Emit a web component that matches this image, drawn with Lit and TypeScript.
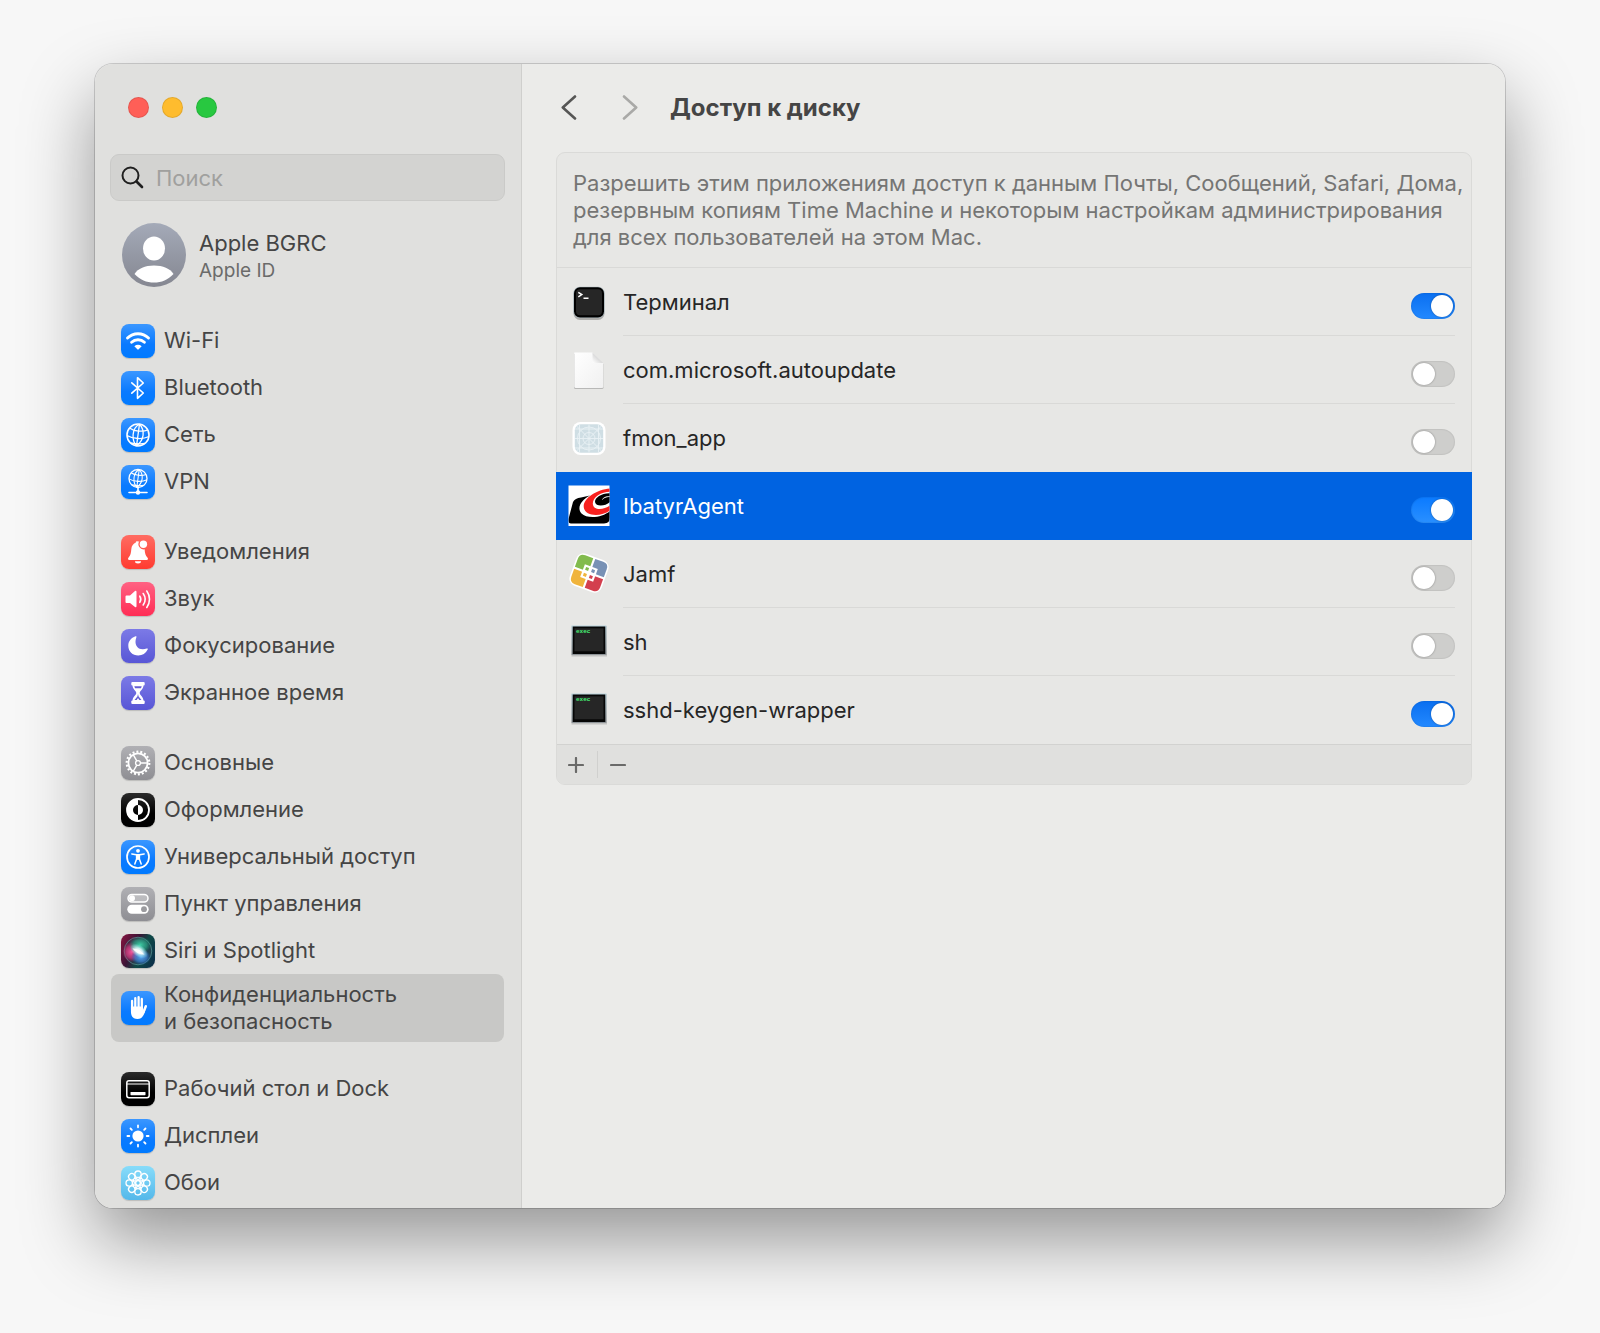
import { LitElement, html, svg, css, nothing } from "lit";
import type { TemplateResult } from "lit";
import { customElement, property, state } from "lit/decorators.js";
import { classMap } from "lit/directives/class-map.js";

interface NavItem {
  icon: string;
  tone: string;
  lines: string[];
}

interface AppEntry {
  id: string;
  name: string;
  icon: string;
  enabled: boolean;
}

const NAV_GROUPS: NavItem[][] = [
  [
    { icon: "wifi", tone: "blue", lines: ["Wi-Fi"] },
    { icon: "bluetooth", tone: "blue", lines: ["Bluetooth"] },
    { icon: "globe", tone: "blue", lines: ["Сеть"] },
    { icon: "vpn", tone: "blue", lines: ["VPN"] },
  ],
  [
    { icon: "bell", tone: "red", lines: ["Уведомления"] },
    { icon: "sound", tone: "pink", lines: ["Звук"] },
    { icon: "moon", tone: "indigo", lines: ["Фокусирование"] },
    { icon: "hourglass", tone: "indigo", lines: ["Экранное время"] },
  ],
  [
    { icon: "gear", tone: "gray", lines: ["Основные"] },
    { icon: "appearance", tone: "black", lines: ["Оформление"] },
    { icon: "accessibility", tone: "blue", lines: ["Универсальный доступ"] },
    { icon: "controls", tone: "gray", lines: ["Пункт управления"] },
    { icon: "siri", tone: "siri", lines: ["Siri и Spotlight"] },
    { icon: "hand", tone: "blue", lines: ["Конфиденциальность", "и безопасность"] },
  ],
  [
    { icon: "dock", tone: "black", lines: ["Рабочий стол и Dock"] },
    { icon: "sun", tone: "blue", lines: ["Дисплеи"] },
    { icon: "flower", tone: "sky", lines: ["Обои"] },
  ],
];

const SPOKES = [0, 45, 90, 135, 180, 225, 270, 315];

const GLOBE = svg`
  <g fill="none" stroke="#fff" stroke-width="1.3">
    <circle r="11" stroke-width="1.6"/>
    <path d="M1.5-11C-6.500-6.500-6.500 5-1.500 11M1.500-11C7.500-4 6 5-1.500 11M1.500-11L-1.500 11"/>
    <path d="M-8.500-7C-4-3.500 5-3 9.800-5M-11 .5C-5 4.200 5 4.500 11 1.500M-7.500 7.800C-4 8.500 3 9 7 8.400"/>
  </g>`;

const GLYPHS: Record<string, TemplateResult> = {
  wifi: svg`
    <g fill="none" stroke="#fff" stroke-width="2.900" stroke-linecap="round">
      <path d="M6.500 14A15 15 0 0 1 27.500 14"/>
      <path d="M10.600 18.300A9.200 9.200 0 0 1 23.400 18.300"/>
    </g>
    <path fill="#fff" d="M13.300 22.200Q17 19.300 20.700 22.200L17.700 25.300Q17 26 16.300 25.300Z"/>`,
  bluetooth: svg`
    <path fill="none" stroke="#fff" stroke-width="1.600" stroke-linejoin="round" stroke-linecap="round"
      d="M10.800 11.800L22.300 22L16.500 27.300V6.700L22.300 12L10.800 22.200"/>`,
  globe: svg`<g transform="translate(17 17)">${GLOBE}</g>`,
  vpn: svg`
    <g transform="translate(17 13.500) scale(.82)">${GLOBE}</g>
    <path stroke="#fff" stroke-width="1.600" stroke-linecap="round" d="M17 22.500V26M8 27.500H26"/>
    <circle cx="17" cy="27.500" r="2.200" fill="#fff"/>`,
  bell: svg`
    <path fill="#fff" d="M17 6.500C20 6.500 17 6.500 18.300 6.300A5.200 5.200 0 0 0 23.600 14.300C23.900 18.500 24.600 20.500 26.400 22.500C27.600 24 27 25 25.600 25H8.400C7 25 6.400 24 7.600 22.500C9.600 20.300 10 18 10.300 14.300C10.500 10.500 12.600 8.500 14.600 7.700C15 6.300 16 6 17 6.500Z"/>
    <path fill="#fff" d="M14 26.200H20A3 2.200 0 0 1 14 26.200Z"/>
    <circle cx="22.400" cy="9.200" r="3.700" fill="#fff"/>`,
  sound: svg`
    <path fill="#fff" d="M5.500 13.500H9L14 9Q15.500 8.200 15.500 10V24Q15.500 25.800 14 25L9 21H5.500Q4.500 21 4.500 20V14.500Q4.500 13.500 5.500 13.500Z"/>
    <g fill="none" stroke="#fff" stroke-width="1.600" stroke-linecap="round">
      <path d="M18.800 14.200A5.500 5.500 0 0 1 18.800 20.300"/>
      <path d="M22.200 11.500A10 10 0 0 1 22.200 23"/>
      <path d="M25.800 9A14 14 0 0 1 25.800 25.500"/>
    </g>`,
  moon: svg`
    <path fill="#fff" d="M14.500 7.300C15.200 7 15.700 7.500 15.400 8.200C12.300 16.500 17.500 22.300 25.800 19.600C26.600 19.400 27 19.800 26.700 20.600C24.800 24.500 21.500 26.500 17.300 26.500C11.500 26.500 7.300 22.300 7.300 16.700C7.300 12.500 10 8.800 14.500 7.300Z"/>`,
  hourglass: svg`
    <g fill="#fff">
      <rect x="10.300" y="6" width="13.400" height="3.600" rx="1"/>
      <rect x="10.300" y="24.400" width="13.400" height="3.600" rx="1"/>
      <path d="M11.500 9H22.500C22.500 13.500 19 14.500 18.700 17C19 19.500 22.500 20.500 22.500 25H11.500C11.500 20.500 15 19.500 15.300 17C15 14.500 11.500 13.500 11.500 9Z"/>
    </g>
    <path fill="#655fd4" d="M13.300 10.300H20.700L20 12.300H14ZM17 18L17.600 20.500L20.500 23.900H18.300L17 22L15.700 23.900H13.500L16.400 20.500Z"/>`,
  gear: svg`
    <g fill="none" stroke="#fff" transform="translate(17 17)">
      <circle r="9.600" stroke-width="1.800"/>
      <circle r="11.300" stroke-width="2.200" stroke-dasharray="1.972 1.972"/>
      <circle r="2.400" stroke-width="1.400"/>
      <path stroke-width="1.400" d="M2.400 0H9.500M-1.200-2.100L-4.800-8.300M-1.200 2.100L-4.800 8.300"/>
    </g>`,
  appearance: svg`
    <circle cx="17" cy="17" r="11" fill="none" stroke="#fff" stroke-width="1.800"/>
    <path fill="#fff" d="M17 6A11 11 0 0 0 17 28V22A5 5 0 0 1 17 12ZM17 12A5 5 0 0 1 17 22Z"/>`,
  accessibility: svg`
    <circle cx="17" cy="17" r="11" fill="none" stroke="#fff" stroke-width="1.700"/>
    <circle cx="17" cy="10.800" r="1.900" fill="#fff"/>
    <path fill="none" stroke="#fff" stroke-width="1.500" stroke-linecap="round" stroke-linejoin="round"
      d="M10.800 13.900L15.300 14.700H18.700L23.200 13.900M15.600 15V19L13.800 24M18.400 15V19L20.200 24M16 19H18"/>
    <path fill="#fff" d="M15.500 14.500H18.500V19.500H15.500Z"/>`,
  controls: svg`
    <rect x="7" y="7.500" width="20" height="7.600" rx="3.800" fill="#fff" fill-opacity=".25" stroke="#fff" stroke-width="1.500"/>
    <circle cx="11" cy="11.300" r="3" fill="#fff"/>
    <rect x="6.300" y="17.700" width="21.400" height="9" rx="4.500" fill="#fff"/>
    <circle cx="23" cy="22.200" r="2.900" fill="#9b9b9f"/>`,
  siri: svg`
    <defs>
      <radialGradient id="siri-core">
        <stop offset="0" stop-color="#fff"/>
        <stop offset=".4" stop-color="#e4ffff" stop-opacity=".85"/>
        <stop offset="1" stop-color="#9ff" stop-opacity="0"/>
      </radialGradient>
      <radialGradient id="siri-pink">
        <stop offset="0" stop-color="#f0559c"/>
        <stop offset=".6" stop-color="#d83a80" stop-opacity=".7"/>
        <stop offset="1" stop-color="#d0206a" stop-opacity="0"/>
      </radialGradient>
      <radialGradient id="siri-blue">
        <stop offset="0" stop-color="#5aa8f5"/>
        <stop offset=".6" stop-color="#3d82d8" stop-opacity=".7"/>
        <stop offset="1" stop-color="#1b5cc4" stop-opacity="0"/>
      </radialGradient>
      <radialGradient id="siri-green">
        <stop offset="0" stop-color="#3fcfa6"/>
        <stop offset=".6" stop-color="#2ba586" stop-opacity=".7"/>
        <stop offset="1" stop-color="#129a78" stop-opacity="0"/>
      </radialGradient>
    </defs>
    <circle cx="17" cy="17" r="13.800" fill="#345" fill-opacity=".45" stroke="#6fb6b0" stroke-opacity=".6" stroke-width=".9"/>
    <ellipse cx="10.500" cy="18" rx="9" ry="10" fill="url(#siri-pink)"/>
    <ellipse cx="19" cy="11" rx="11" ry="8.500" fill="url(#siri-green)"/>
    <ellipse cx="20" cy="23" rx="10" ry="8" fill="url(#siri-blue)"/>
    <ellipse cx="18" cy="17" rx="10" ry="6" fill="url(#siri-core)" transform="rotate(32 18 17)"/>
    <path fill="#fff" fill-opacity=".9" d="M11.500 14.500Q18 14 23.500 20.500Q16 20.500 11.500 14.500Z"/>`,
  hand: svg`
    <g fill="none" stroke="#fff" stroke-width="2.300" stroke-linecap="round">
      <path d="M11.100 10V19M14.300 7.200V17M17.600 6.200V17M20.800 8V18"/>
      <path d="M24.800 15.200L22.300 21.500" stroke-width="2.500"/>
    </g>
    <path fill="#fff" d="M9.950 15.500H21.950V19.500L24.500 18.500C23 24 21.500 28 16.500 28C12 28 9.950 25 9.950 21Z"/>`,
  dock: svg`
    <rect x="5.800" y="8.700" width="22.400" height="17" rx="2.200" fill="none" stroke="#fff" stroke-width="1.500"/>
    <path stroke="#fff" stroke-width="1.200" d="M6 12H28"/>
    <rect x="9.500" y="20" width="15" height="3.200" rx=".6" fill="#fff"/>`,
  sun: svg`
    <circle cx="17" cy="17" r="5.600" fill="#fff"/>
    ${SPOKES.map(
      (a) => svg`<path stroke="#fff" stroke-width="1.800" stroke-linecap="round" d="M17 6.400V8.300" transform="rotate(${a} 17 17)"/>`,
    )}`,
  flower: svg`
    <g fill="none" stroke="#fff" stroke-width="1.300">
      ${SPOKES.map((a) => svg`<circle cx="17" cy="8.200" r="3.200" transform="rotate(${a} 17 17)"/>`)}
      ${SPOKES.map((a) => svg`<path d="M17 14.800L15 11.200M17 14.800L19 11.200" transform="rotate(${a} 17 17)"/>`)}
      <circle cx="17" cy="17" r="2.300"/>
    </g>`,
};

const EXEC = svg`
  <defs>
    <linearGradient id="frame" x1="0" y1="0" x2="0" y2="1">
      <stop offset="0" stop-color="#b9d3dc"/>
      <stop offset="1" stop-color="#8d9296"/>
    </linearGradient>
  </defs>
  <g transform="translate(0 -1)">
    <rect x="3.500" y="6" width="35.500" height="30.500" fill="#000" fill-opacity=".16"/>
    <rect x="3.500" y="5.500" width="35" height="29.500" fill="url(#frame)"/>
    <rect x="4.700" y="6.500" width="32.600" height="27.500" fill="#060606"/>
    <rect x="6.500" y="8.300" width="29" height="23" fill="#262626"/>
    <text x="8" y="13" font-family="Liberation Mono, monospace" font-weight="700" font-size="6" fill="#46f074">exec</text>
  </g>`;

const APP_ICONS: Record<string, TemplateResult> = {
  terminal: svg`
    <rect x="5.500" y="7" width="31" height="32" rx="6.500" fill="#000" fill-opacity=".25"/>
    <rect x="5.300" y="5.800" width="31.400" height="31.200" rx="6.500" fill="#aebcc2"/>
    <rect x="6" y="6.300" width="30" height="30.200" rx="6" fill="#000"/>
    <rect x="8" y="8.300" width="26" height="26" rx="4" fill="#262626"/>
    <path fill="none" stroke="#fff" stroke-width="1.500" d="M10.300 11.300L13.800 13.600L10.300 15.900M15.500 17.300H20.500"/>`,
  document: svg`
    <defs>
      <linearGradient id="paper" x1="0" y1="0" x2="1" y2="1">
        <stop offset="0" stop-color="#fff"/>
        <stop offset="1" stop-color="#f0f0f0"/>
      </linearGradient>
      <linearGradient id="fold" x1="0" y1="1" x2="1" y2="0">
        <stop offset="0" stop-color="#fff"/>
        <stop offset=".5" stop-color="#d9d9d9"/>
      </linearGradient>
    </defs>
    <path fill="#000" fill-opacity=".2" d="M6 5H25L35.500 15V38.500Q35.500 40 34 40H7.500Q6 40 6 38.500Z"/>
    <path fill="url(#paper)" d="M6.500 3.500H24.500L35.300 14V37.500Q35.300 39 33.800 39H7.800Q6.300 39 6.300 37.500V3.500Z"/>
    <path fill="url(#fold)" d="M24.500 3.500V12.500Q24.500 14 26 14H35.300Z"/>`,
  fmon: svg`
    <rect x="4.500" y="5" width="33" height="33" rx="8" fill="#fff"/>
    <rect x="6.800" y="7.300" width="28.400" height="28.400" rx="6" fill="#cfdee4"/>
    <g fill="none" stroke="#eaf2f5" stroke-width=".9">
      <path d="M21 7.500V35.500M7 21.500H35M11.500 8V35M30.500 8V35M7 12H35M7 31H35M8.500 9L33.500 34M33.500 9L8.500 34"/>
      <circle cx="21" cy="21.500" r="11.500"/>
      <circle cx="21" cy="21.500" r="6"/>
    </g>`,
  ibatyr: svg`
    <defs><clipPath id="ib"><rect x=".5" y=".5" width="41" height="40.500"/></clipPath></defs>
    <rect x=".5" y=".5" width="41" height="40.500" fill="#fff"/>
    <g clip-path="url(#ib)">
      <path fill="#000" d="M5 17Q7 13 13 12.500L22 10.500C13 15 8.500 23 13.500 28.500C19 34 34 33 42 26V32Q42 38.500 36 38.500H3Q0 38.500 .5 34Z"/>
      <path fill="#f8211f" d="M42 3.500C28 4.500 14.500 14 15.800 22.500C17 31 32 32.500 42 25.500V20.500C35 25.500 25 25.500 24.800 18.500C24.700 12.500 33 6.800 42 6.800Z"/>
      <path fill="#000" d="M42 8.200C34 7.800 26.500 12.500 27 17C27.800 22 37 21.500 42 17Z"/>
      <path fill="none" stroke="#fff" stroke-width="1" d="M42 11.500C38 11.500 35 13 34.500 14.500"/>
    </g>`,
  jamf: svg`
    <g transform="translate(21 20) rotate(20) scale(1.060) translate(-21 -22)">
      <rect x="5" y="6" width="32" height="32" rx="7" fill="#fff"/>
      <path fill="#82bb4d" d="M12 7.500H20V21H6.500V13Q6.500 7.500 12 7.500Z"/>
      <path fill="#7891b5" d="M22 7.500H30Q35.500 7.500 35.500 13V21H22Z"/>
      <path fill="#f0b43c" d="M6.500 23H20V36.500H12Q6.500 36.500 6.500 31Z"/>
      <path fill="#d33f4e" d="M22 23H35.500V31Q35.500 36.500 30 36.500H22Z"/>
      <rect x="14.500" y="15.500" width="13" height="13" fill="#fff"/>
      <rect x="16.500" y="17.500" width="3" height="3" fill="#82bb4d"/>
      <rect x="22.500" y="17.500" width="3" height="3" fill="#7891b5"/>
      <rect x="16.500" y="23.500" width="3" height="3" fill="#f0b43c"/>
      <rect x="22.500" y="23.500" width="3" height="3" fill="#d33f4e"/>
    </g>`,
  exec: EXEC,
};

@customElement("settings-sidebar")
export class SettingsSidebar extends LitElement {
  @state() private selected = "hand";

  static styles = css`
    :host {
      display: block;
      box-sizing: border-box;
      padding: 33px 16px 2px 15px;
      background: #e0e0de;
      border-right: 1px solid #cfcfcd;
      color: #454545;
    }
    .lights {
      display: flex;
      gap: 13px;
      padding: 0 18px;
    }
    .light {
      width: 21px;
      height: 21px;
      padding: 0;
      border: 1px solid rgba(0, 0, 0, 0.1);
      border-radius: 50%;
    }
    .close { background: #ff5f57; }
    .minimize { background: #febc2e; }
    .zoom { background: #28c840; }
    .search {
      display: flex;
      align-items: center;
      gap: 12px;
      height: 47px;
      box-sizing: border-box;
      margin-top: 36px;
      padding: 0 10px;
      border: 1px solid #cacac8;
      border-radius: 9px;
      background: #d3d3d1;
    }
    .search svg {
      flex: none;
      width: 23px;
      height: 23px;
    }
    .search input {
      flex: 1;
      min-width: 0;
      border: 0;
      padding: 0;
      outline: 0;
      background: none;
      font: inherit;
      color: #262626;
    }
    .search input::placeholder {
      color: #a0a09e;
      opacity: 1;
    }
    .account {
      display: flex;
      align-items: center;
      gap: 13px;
      margin: 22px 0 30px;
      padding: 0 12px;
      color: inherit;
      text-decoration: none;
    }
    .avatar {
      width: 64px;
      height: 64px;
    }
    .who {
      display: grid;
      padding-top: 3px;
      line-height: 27px;
    }
    .kind {
      font-size: 19px;
      color: #6b6b6a;
    }
    .group {
      margin: 0 0 23px;
      padding: 0;
      list-style: none;
    }
    .group:last-child {
      margin: 0;
    }
    .item {
      display: flex;
      align-items: center;
      gap: 9px;
      min-height: 47px;
      margin: 0 1px;
      padding: 0 10px;
      border-radius: 8px;
      line-height: 27px;
      color: inherit;
      text-decoration: none;
    }
    .item.two {
      min-height: 68px;
    }
    .item.current {
      background: #c8c8c6;
    }
    .tile {
      flex: none;
      width: 34px;
      height: 34px;
      border-radius: 8px;
      box-shadow: 0 1px 1px rgba(0, 0, 0, 0.16);
    }
    .tile svg {
      display: block;
    }
    .line {
      display: block;
      white-space: nowrap;
    }
    .blue { background: linear-gradient(#3b97ff, #0a7aff 60%, #007aff); }
    .red { background: linear-gradient(#ff6c62, #ff3b30); }
    .pink { background: linear-gradient(#ff6283, #ff2d55); }
    .indigo { background: linear-gradient(#7c7ae6, #5856d6); }
    .gray { background: linear-gradient(#b0b0b4, #8e8e93); }
    .black { background: linear-gradient(#2b2b2b, #000 60%); }
    .sky { background: linear-gradient(#87dcfa, #54b8ea); }
    .siri { background: linear-gradient(115deg, #8a1440, #3b1436 38%, #0f4a47 60%, #0b2b4a); }
  `;

  private renderItem(item: NavItem) {
    const current = item.icon === this.selected;
    return html`
      <li>
        <a
          href="#${item.icon}"
          class=${classMap({ item: true, two: item.lines.length > 1, current })}
          aria-current=${current ? "page" : nothing}
          @click=${() => (this.selected = item.icon)}
        >
          <span class="tile ${item.tone}">
            <svg viewBox="0 0 34 34" aria-hidden="true">${GLYPHS[item.icon]}</svg>
          </span>
          <span>${item.lines.map((line) => html`<span class="line">${line}</span>`)}</span>
        </a>
      </li>
    `;
  }

  render() {
    return html`
      <div class="lights">
        <button class="light close" aria-label="Закрыть"></button>
        <button class="light minimize" aria-label="Свернуть"></button>
        <button class="light zoom" aria-label="Развернуть"></button>
      </div>
      <label class="search">
        <svg viewBox="0 0 23 23" fill="none" stroke="#1f1f1f" stroke-linecap="round" aria-hidden="true">
          <circle cx="9.500" cy="9.500" r="8" stroke-width="2" />
          <path d="M15.500 15.500L21 21" stroke-width="2.600" />
        </svg>
        <input type="text" placeholder="Поиск" aria-label="Поиск" />
      </label>
      <a class="account" href="#apple-id">
        <svg class="avatar" viewBox="0 0 64 64" aria-hidden="true">
          <defs>
            <linearGradient id="av" x1="0" y1="0" x2="0" y2="1">
              <stop offset="0" stop-color="#a4aab8" />
              <stop offset="1" stop-color="#858791" />
            </linearGradient>
          </defs>
          <circle cx="32" cy="32" r="32" fill="url(#av)" />
          <ellipse cx="32" cy="25.500" rx="11" ry="12" fill="#fff" />
          <path fill="#fff" d="M12.500 51C16 45.500 23 42.500 32 42.500S48 45.500 51.500 51C46 57 39.500 59.500 32 59.500S18 57 12.500 51Z" />
        </svg>
        <span class="who">
          <span>Apple BGRC</span>
          <span class="kind">Apple ID</span>
        </span>
      </a>
      <nav>
        ${NAV_GROUPS.map((group) => html`<ul class="group">${group.map((item) => this.renderItem(item))}</ul>`)}
      </nav>
    `;
  }
}

@customElement("app-access-row")
export class AppAccessRow extends LitElement {
  @property({ attribute: false }) entry!: AppEntry;
  @property({ type: Boolean, reflect: true }) selected = false;
  @property({ type: Boolean, reflect: true }) ruled = false;

  static styles = css`
    :host {
      display: flex;
      box-sizing: border-box;
      height: 68px;
      margin: 0 -1px;
      padding: 0 17px 0 12px;
      gap: 13px;
      color: #262626;
    }
    :host([selected]) {
      background: #0063e1;
      color: #fff;
    }
    .icon {
      flex: none;
      align-self: center;
      width: 42px;
      height: 42px;
    }
    .body {
      flex: 1;
      display: flex;
      align-items: center;
      justify-content: space-between;
      border-bottom: 1px solid transparent;
    }
    :host([ruled]) .body {
      border-color: #d9d9d7;
    }
    .name {
      flex: 1;
      padding-top: 2px;
      line-height: 27px;
    }
    .switch {
      appearance: none;
      display: flex;
      align-items: center;
      box-sizing: border-box;
      width: 44px;
      height: 26px;
      margin: 8px 0 0;
      padding: 0 2px;
      border-radius: 13px;
      background: #cececc;
      box-shadow: inset 0 0 1px 1px rgba(0, 0, 0, 0.06);
    }
    .switch::before {
      content: "";
      width: 22px;
      height: 22px;
      border-radius: 50%;
      background: #fff;
      box-shadow: 0 0 2px rgba(0, 0, 0, 0.4);
    }
    .switch:checked {
      justify-content: flex-end;
      background: linear-gradient(#0a6ff0, #2389ff);
    }
    :host([selected]) .switch {
      background: linear-gradient(#0a7aff, #2a90ff);
    }
  `;

  render() {
    const { id, name, icon, enabled } = this.entry;
    return html`
      <svg class="icon" viewBox="0 0 42 42" aria-hidden="true">${APP_ICONS[icon]}</svg>
      <div class="body">
        <label class="name" for=${id}>${name}</label>
        <input class="switch" id=${id} type="checkbox" role="switch" .checked=${enabled} />
      </div>
    `;
  }
}

@customElement("disk-access-pane")
export class DiskAccessPane extends LitElement {
  @state() private entries: AppEntry[] = [
    { id: "terminal", name: "Терминал", icon: "terminal", enabled: true },
    { id: "autoupdate", name: "com.microsoft.autoupdate", icon: "document", enabled: false },
    { id: "fmon", name: "fmon_app", icon: "fmon", enabled: false },
    { id: "ibatyr", name: "IbatyrAgent", icon: "ibatyr", enabled: true },
    { id: "jamf", name: "Jamf", icon: "jamf", enabled: false },
    { id: "sh", name: "sh", icon: "exec", enabled: false },
    { id: "sshd", name: "sshd-keygen-wrapper", icon: "exec", enabled: true },
  ];
  @state() private selected = "ibatyr";

  static styles = css`
    :host {
      display: block;
      box-sizing: border-box;
      padding: 0 33px 0 34px;
      background: #ebebe9;
    }
    .bar {
      display: flex;
      align-items: center;
      height: 88px;
    }
    .nav {
      display: flex;
      align-items: center;
      justify-content: center;
      width: 26px;
      height: 30px;
      padding: 0;
      border: 0;
      background: none;
      color: #565655;
    }
    .nav + .nav {
      margin-left: 35px;
    }
    .nav:disabled {
      color: #a9a9a7;
    }
    h1 {
      margin: 0 0 0 27px;
      font-size: 24px;
      font-weight: 700;
      line-height: 30px;
      color: #454545;
    }
    .card {
      border: 1px solid #dadad8;
      border-radius: 9px;
      background: #e7e7e5;
    }
    .about {
      margin: 0;
      padding: 17px 0 16px 16px;
      border-bottom: 1px solid #d9d9d7;
      line-height: 27px;
      color: #757574;
    }
    .tools {
      display: flex;
      align-items: center;
      height: 39px;
      border-top: 1px solid #d2d2d0;
      border-radius: 0 0 8px 8px;
      background: #e0e0de;
    }
    .tool {
      display: flex;
      align-items: center;
      justify-content: center;
      box-sizing: border-box;
      width: 41px;
      height: 27px;
      padding: 0 2px 0 0;
      border: 0;
      background: none;
      color: #6a6a69;
    }
    .tool:first-child {
      border-right: 1px solid #d0d0ce;
    }
  `;

  private get rows() {
    return this.entries.map((entry, i) => {
      const next = this.entries[i + 1];
      const selected = entry.id === this.selected;
      return html`
        <app-access-row
          .entry=${entry}
          ?selected=${selected}
          ?ruled=${!selected && !!next && next.id !== this.selected}
        ></app-access-row>
      `;
    });
  }

  render() {
    return html`
      <header class="bar">
        <button class="nav" aria-label="Назад">
          <svg width="16" height="26" viewBox="0 0 16 26" fill="none" stroke="currentColor" stroke-width="2.600" stroke-linecap="round" stroke-linejoin="round"><path d="M14 1.500L1.800 12.500L14 23.500" /></svg>
        </button>
        <button class="nav" aria-label="Вперёд" disabled>
          <svg width="16" height="26" viewBox="0 0 16 26" fill="none" stroke="currentColor" stroke-width="2.600" stroke-linecap="round" stroke-linejoin="round"><path d="M2 1.500L14.200 12.500L2 23.500" /></svg>
        </button>
        <h1>Доступ к диску</h1>
      </header>
      <section class="card">
        <p class="about">
          Разрешить этим приложениям доступ к данным Почты, Сообщений, Safari, Дома,<br />
          резервным копиям Time Machine и некоторым настройкам администрирования<br />
          для всех пользователей на этом Mac.
        </p>
        ${this.rows}
        <div class="tools">
          <button class="tool" aria-label="Добавить">
            <svg width="16" height="16" viewBox="0 0 16 16" stroke="currentColor" stroke-width="2.200" stroke-linecap="round"><path d="M8 1V15M1 8H15" /></svg>
          </button>
          <button class="tool" aria-label="Удалить">
            <svg width="16" height="16" viewBox="0 0 16 16" stroke="currentColor" stroke-width="2.200" stroke-linecap="round"><path d="M1 8H15" /></svg>
          </button>
        </div>
      </section>
    `;
  }
}

@customElement("app-root")
export class AppRoot extends LitElement {
  static styles = css`
    :host {
      display: block;
      box-sizing: border-box;
      min-height: 100vh;
      padding: 64px 95px 124px;
      background: #f7f7f7;
      font-family: Inter, "Liberation Sans", sans-serif;
      font-size: 22px;
    }
    .window {
      display: grid;
      grid-template-columns: 427px minmax(0, 1fr);
      border-radius: 18px;
      overflow: hidden;
      box-shadow:
        0 0 0 1px rgba(0, 0, 0, 0.16),
        0 32px 72px rgba(0, 0, 0, 0.4);
    }
  `;

  render() {
    return html`
      <main class="window">
        <settings-sidebar></settings-sidebar>
        <disk-access-pane></disk-access-pane>
      </main>
    `;
  }
}
